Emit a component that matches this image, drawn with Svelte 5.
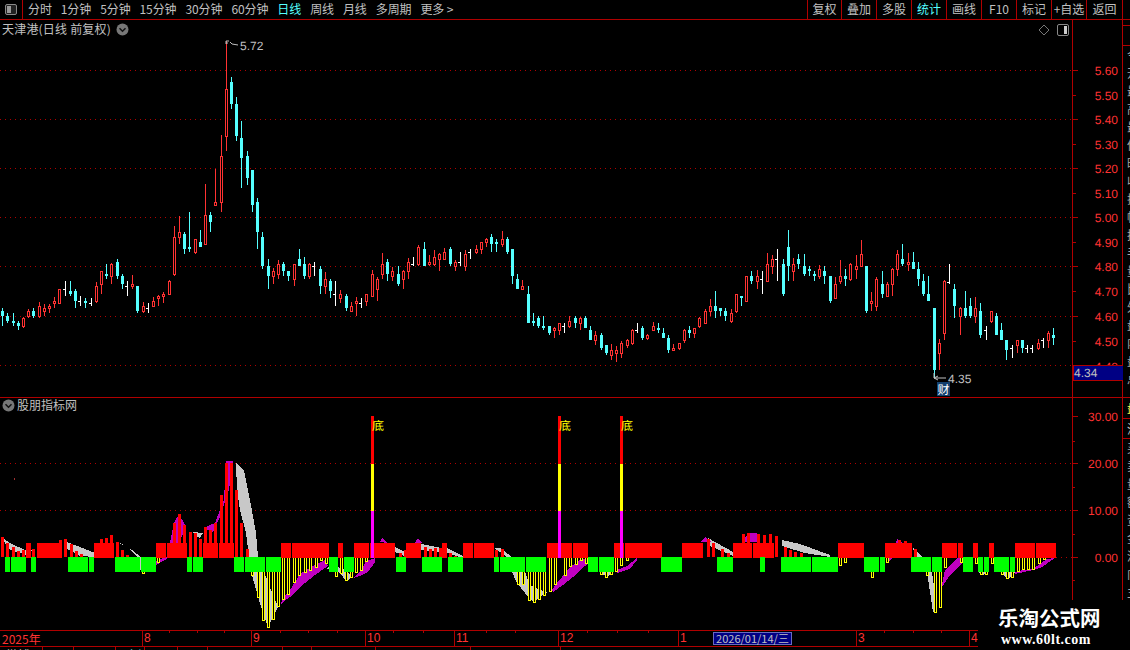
<script>
  const raw = [
    [0, 230, `7 c 234 243 258 288;22 c 250 258 273 280;40 c 250 273 280 288;55 c 273 279 288 300;70 r 262 265 291 294;85 r 238 243 261 264;100 c 235 243 258 264;118 r 217 228 261 264;133 r 223 235 246 258;148 r 223 228 237 250;163 r 202 213 222 234;178 r 178 178 222 222;196 w 153 178 180 198;211 c 153 183 192 198;226 c 178 183 213 234;241 w 198 213 215 228;256 c 205 213 220 234;273 w 204 219 221 228;289 r 156 168 216 219;304 r 123 123 165 192;319 c 102 132 138 147;334 r 99 102 141 162;352 c 87 96 138 147;367 c 132 138 162 177;382 w 153 168 170 198;397 r 135 163 171 177;412 c 168 168 243 249;430 r 216 228 246 249;445 w 219 234 235 249;460 r 201 213 231 231;475 r 195 198 207 228;490 r 186 192 201 219`],
    [160, 30, `28 r 750 754 795 795;43 r 588 622 735 738;58 r 558 607 623 642;73 c 606 612 657 672;88 c 546 652 657 666;106 r 627 628 669 672;121 c 600 636 651 651;136 r 462 556 644 644;151 c 546 555 576 606;166 r 417 517 527 527;184 r 315 379 518 546;199 r 33 178 320 363;214 c 141 156 222 237;229 c 201 222 318 333;244 c 273 324 384 474;262 c 363 378 444 465;277 c 420 420 525 546;292 c 504 516 606 657;307 c 606 621 708 717;325 c 687 708 738 777;340 r 714 723 741 762;355 r 690 702 735 747`],
    [280, 220, `10 c 126 132 153 168;25 c 153 153 168 183;43 r 132 132 180 198;58 c 87 117 138 138;73 c 111 132 168 177;88 r 129 132 171 177;103 w 126 138 140 168;121 c 138 147 198 222;136 r 156 177 201 222;151 c 177 183 213 234;166 w 183 222 224 258;181 r 210 222 237 249;199 c 222 228 264 273;214 r 246 258 276 276;229 r 232 243 252 288;244 w 234 249 251 264;259 r 222 222 246 258;277 r 150 162 231 231;292 r 171 177 210 243;307 r 99 132 165 177;322 c 117 126 162 183;337 r 141 153 171 183;355 c 138 162 192 198;370 r 150 153 180 207;385 r 114 126 156 177;400 w 111 132 135 138;415 r 75 81 135 138;433 c 66 87 138 138;448 r 105 126 135 138;463 r 90 111 135 138;478 r 99 102 120 153;493 r 84 96 120 120;511 c 81 87 132 138;526 r 120 126 141 153;541 w 96 126 128 138;556 r 90 102 141 153;571 w 87 96 98 117;589 r 75 87 99 102;604 r 66 66 90 102;619 r 54 57 69 81;634 c 42 51 72 96;649 c 57 66 72 96;667 r 33 57 75 81;682 c 51 57 96 102;697 c 87 87 168 192;712 c 162 177 207 207;727 r 180 198 210 210;745 c 198 222 309 309;760 c 279 303 309 318;775 c 288 294 318 324;790 c 288 318 324 330;808 c 318 318 339 345;823 r 321 324 333 354;838 r 309 309 333 345;853 w 309 318 320 339;868 r 288 304 322 324`],
    [570, 220, `16 c 288 294 309 324;31 r 291 294 312 330;46 c 288 294 324 324;61 c 318 330 360 360;76 r 333 345 363 375;94 c 339 345 384 390;109 c 375 375 399 405;124 r 372 390 408 420;139 r 378 390 402 426;154 r 363 369 402 414;172 r 357 360 378 384;187 r 327 330 372 375;202 w 309 330 332 339;217 c 318 324 354 360;232 r 342 345 357 360;250 r 306 318 333 333;265 c 309 324 330 339;280 c 324 339 354 354;295 c 345 354 390 399;310 r 372 384 393 393;328 r 369 369 387 390;343 r 327 330 363 369;358 c 318 330 339 354;373 r 324 324 342 354;388 r 291 294 321 324;406 r 267 273 312 312;421 r 237 258 276 288;436 c 213 258 273 294;451 c 264 264 273 288;466 c 264 273 288 303;484 r 267 279 306 309;499 r 222 222 276 279;514 c 228 228 234 258;529 r 168 168 246 246;544 c 153 168 183 192;562 r 150 168 186 207;577 w 153 177 179 222;592 r 99 132 186 186;607 r 105 117 141 162;622 w 87 117 119 183;640 c 117 132 222 228;655 c 30 81 138 183;670 r 114 132 156 183;685 c 102 117 132 147;703 c 102 138 162 168;718 c 138 147 153 168;733 c 153 162 168 183;748 r 135 147 171 177;763 c 138 153 168 192`],
    [825, 225, `16 c 153 153 228 234;31 r 156 177 222 222;46 r 105 153 171 177;61 c 132 153 162 183;76 r 114 117 165 168;94 r 90 123 135 162;109 r 45 87 126 126;124 c 123 123 258 264;139 r 201 228 237 258;154 r 156 162 246 258;172 c 138 177 207 219;187 r 171 177 216 216;202 r 129 132 180 213;217 r 75 87 135 153;232 c 57 102 117 123;250 r 84 111 120 138;265 c 81 111 132 132;280 c 111 132 162 183;295 c 147 168 207 213;310 c 153 207 228 228;328 c 249 249 435 459;343 r 342 354 387 435;358 r 165 168 327 345;373 w 117 171 173 177;388 c 177 192 243 279;406 r 246 249 276 330;421 c 198 249 273 279;436 c 219 243 273 279;451 r 216 249 276 294;466 c 234 258 330 339;484 w 303 315 317 345;499 r 258 258 291 294;514 c 264 273 330 330;529 c 294 315 345 345;544 c 345 345 375 405;562 w 360 369 371 399;577 r 345 345 363 384;592 c 345 345 369 384;607 w 360 369 371 384;622 w 360 369 371 384;640 r 342 354 372 375;655 w 339 345 347 369;670 r 318 324 348 369;685 c 309 330 339 360`]
  ];
  const candles = raw.flatMap(([ox, oy, s]) => s.split(';').map((row) => {
    const p = row.split(' ');
    const [hi, top, bot, lo] = p.slice(2).map((v) => Math.round(+v / 3) + oy);
    return { c: Math.round(+p[0] / 3 + ox - 0.5), t: p[1], hi, top, bot: Math.max(bot, top + 1), lo };
  }));

  const priceLabels = [[5.6, 70], [5.5, 95], [5.4, 119], [5.3, 144], [5.2, 168], [5.1, 193], [5.0, 217], [4.9, 242], [4.8, 266], [4.7, 291], [4.6, 316], [4.5, 341], [4.4, 366]];
  const priceGrid = [70, 119, 168, 217, 266, 316, 365];

  const redBlocks = [[26, 31], [37, 62], [94, 114], [156, 166], [167, 187], [203, 218], [219, 234], [281, 291], [292, 329], [338, 343], [354, 369], [370, 395], [406, 421], [442, 447], [463, 473], [474, 494], [547, 572], [573, 588], [614, 624], [625, 662], [682, 703], [733, 752], [753, 774], [838, 864], [885, 912], [942, 957], [958, 963], [973, 978], [989, 994], [1015, 1035], [1036, 1056]];
  const greenBlocks = [[5, 10], [11, 26], [31, 36], [68, 88], [89, 94], [115, 140], [141, 156], [187, 192], [193, 203], [234, 244], [245, 265], [266, 281], [329, 338], [344, 354], [396, 406], [422, 442], [448, 463], [494, 499], [500, 525], [526, 546], [588, 598], [599, 614], [661, 682], [717, 733], [760, 765], [781, 811], [812, 838], [864, 879], [880, 885], [911, 931], [932, 942], [963, 973], [978, 983], [984, 989], [994, 1009], [1010, 1015]];
  const redBars = [[2, 537], [7, 543], [13, 547], [18, 551], [23, 550], [33, 549], [60, 540], [65, 539], [71, 544], [76, 551], [81, 554], [101, 539], [106, 538], [111, 535], [117, 542], [122, 550], [127, 555], [174, 523], [179, 514], [184, 525], [190, 532], [195, 533], [200, 539], [205, 527], [210, 530], [215, 523], [221, 495], [226, 463], [231, 463], [236, 490], [241, 523], [247, 549], [400, 553], [405, 550], [425, 547], [430, 549], [435, 548], [440, 548], [450, 553], [455, 556], [496, 550], [502, 549], [708, 539], [713, 543], [722, 549], [728, 553], [743, 534], [748, 533], [758, 534], [764, 535], [770, 534], [776, 536], [785, 547], [790, 550], [795, 552], [801, 553], [899, 540], [905, 541], [910, 545], [915, 549]];
  const yellowBars = [[143, 573], [158, 562], [252, 575], [258, 597], [263, 620], [268, 627], [273, 619], [278, 606], [283, 599], [288, 594], [294, 582], [299, 575], [305, 572], [310, 570], [316, 567], [321, 560], [326, 563], [331, 569], [336, 576], [341, 573], [346, 580], [351, 577], [356, 572], [361, 570], [366, 561], [518, 584], [523, 584], [529, 600], [534, 602], [539, 599], [544, 595], [550, 591], [555, 584], [565, 575], [570, 566], [576, 564], [581, 560], [586, 563], [601, 574], [606, 577], [611, 574], [616, 571], [621, 565], [627, 560], [840, 565], [845, 562], [872, 577], [887, 562], [927, 575], [935, 612], [940, 607], [945, 567], [961, 562], [976, 563], [981, 574], [986, 574], [992, 563], [1002, 574], [1007, 578], [1012, 577], [1018, 571], [1023, 569], [1028, 569], [1033, 569], [1039, 563], [1044, 559]];
  const grayAreas = [
    '1,537 10,543 27,551 33,550 27,555 10,550',
    '64,541 80,547 95,553 95,557 80,556 64,547',
    '115,541 127,547 137,557 141,572 146,572 141,557 132,550 122,544',
    '193,532 203,533 200,538 197,537',
    '236,463 244,470 250,500 256,533 258,557 264,572 271,590 278,607 268,627 259,600 251,572 249,557 246,533 240,510 237,490',
    '325,568 340,573 346,581 353,577 345,570 335,566',
    '395,547 407,553 407,557 395,552',
    '421,544 442,548 442,552 421,550',
    '447,548 463,556 463,558 447,553',
    '494,548 500,548 512,557 507,557 500,552',
    '512,572 517,583 525,593 533,602 543,595 548,592 540,590 530,585 525,572',
    '600,572 607,577 613,572',
    '708,538 733,552 733,556 708,545',
    '782,540 800,544 830,555 830,557 805,553 782,546',
    '913,548 922,557 915,557',
    '927,572 933,612 937,608 932,572',
    '978,572 983,575 988,572',
    '1000,572 1007,578 1013,577 1015,572'
  ];
  const magentaAreas = [
    '156,565 170,557 165,557 156,561',
    '170,543 174,523 179,514 185,525 184,533 178,543',
    '203,528 215,523 220,510 224,500 226,461 233,461 229,490 220,517 213,532',
    '281,604 283,598 290,590 300,574 315,565 325,560 328,566 315,575 300,587 290,597 283,602',
    '353,578 360,572 366,561 375,558 375,562 368,572 360,576',
    '380,542 382,538 387,543',
    '415,543 418,538 422,543',
    '552,590 557,583 562,577 570,567 580,560 588,558 588,564 582,568 573,577 563,585 553,592',
    '617,570 627,566 637,558 637,560 630,569 617,573',
    '665,572 682,558 672,558',
    '700,542 705,537 712,542',
    '743,542 748,533 757,533 760,542',
    '888,562 893,557 888,557',
    '896,543 897,539 903,543',
    '942,585 945,570 957,558 962,558 963,562 950,575 940,590',
    '1015,572 1023,570 1033,569 1047,559 1054,558 1055,558 1042,567 1033,570 1015,574'
  ];
  const signals = [371, 558, 620];
  const indLabels = [['30.00', 416], ['20.00', 463], ['10.00', 510], ['0.00', 557]];
  const minorTicks = [441, 487, 534, 580];

  const dateMarks = [['8', 142], ['9', 251], ['10', 365], ['11', 454], ['12', 558], ['1', 678], ['3', 856], ['4', 969]];
  const dateTicks = [169, 197, 224, 280, 308, 337, 393, 423, 486, 515, 587, 617, 648, 884, 913, 941];
  const stripSeps = [42, 73, 115, 144, 177, 207, 282, 311, 375, 470, 560];

  const leftTabs = ['分时', '1分钟', '5分钟', '15分钟', '30分钟', '60分钟', '日线', '周线', '月线', '多周期', '更多 >'];
  const rightTabs = ['复权', '叠加', '多股', '统计', '画线', 'F10', '标记', '+自选', '返回'];
  const sideTop = '今开最高最低昨收振幅换手量比外盘内盘总量'.split('').slice(0, 19);
  const sideBottom = '买卖量额资金流向主'.split('');
</script>

<div class="app">
  <header class="toolbar">
    <div class="layout-btn">
      <svg width="12" height="11" viewBox="0 0 12 11"><rect x=".5" y=".5" width="11" height="10" rx="1.5" fill="#222" stroke="#8a8a8a" /><rect x="2" y="2" width="4" height="7" fill="#9a9a9a" /></svg>
    </div>
    <nav class="tabs">
      {#each leftTabs as t}
        <span class="tab" class:active={t === '日线'}>{t}</span>
      {/each}
    </nav>
    <nav class="cells">
      {#each rightTabs as t}
        <span class="cell" class:active={t === '统计'}>{t}</span>
      {/each}
    </nav>
  </header>

  <div class="body">
    <main class="charts">
      <section class="pane price">
        <div class="legend">
          <span class="title">天津港(日线 前复权)</span>
          <svg width="13" height="13" viewBox="0 0 13 13"><circle cx="6.5" cy="6.5" r="6" fill="#777" /><path d="M3.5 5.2 6.5 8.2 9.5 5.2" fill="none" stroke="#111" stroke-width="1.5" /></svg>
        </div>
        <div class="tools">
          <svg width="12" height="12" viewBox="0 0 12 12"><path d="M6 1 11 6 6 11 1 6Z" fill="none" stroke="#777" /></svg>
          <svg width="12" height="12" viewBox="0 0 12 12"><rect x=".5" y=".5" width="11" height="11" rx="1.5" fill="none" stroke="#888" /><rect x="7" y="2" width="3" height="8" fill="#ccc" /></svg>
        </div>
        <svg class="plot" width="1123" height="377" viewBox="0 20 1123 377" shape-rendering="crispEdges">
          {#each priceGrid as y}
            <line x1="0" x2="1072" y1={y + 0.5} y2={y + 0.5} class="grid" />
          {/each}
          {#each candles as k}
            {#if k.t === 'c'}
              <rect x={k.c} y={k.hi} width="1" height={k.lo - k.hi} class="cyan" />
              <rect x={k.c - 1} y={k.top} width="3" height={k.bot - k.top} class="cyan" />
            {:else if k.t === 'w'}
              <rect x={k.c} y={k.hi} width="1" height={k.lo - k.hi} class="white" />
              <rect x={k.c - 2} y={k.top} width="2" height="1" class="white" />
            {:else}
              <rect x={k.c} y={k.hi} width="1" height={k.lo - k.hi} class="red" />
              <rect x={k.c - 0.5} y={k.top + 0.5} width="2" height={Math.max(k.bot - k.top - 1, 1)} class="hollow" />
            {/if}
          {/each}

          <path d="M226 41 H229 M226 43 H228 M226 41 V44 M230 42 L232 44 L238 45" class="note" shape-rendering="auto" />
          <text x="240" y="50" class="val">5.72</text>
          <path d="M934 373 V378 H946 M934 378 L938 376 M934 378 L938 380" class="note" shape-rendering="auto" />
          <text x="948" y="383" class="val">4.35</text>
          <rect x="937" y="382" width="13" height="14" fill="#123f6e" />
          <text x="937.5" y="394" class="cai">财</text>

          <rect x="1072" y="20" width="1" height="377" class="line" />
          {#each priceLabels as [v, y], i}
            <rect x="1073" y={y} width={i % 2 === 0 ? 5 : 3} height="1" class="line" />
            <text x="1118" y={y + 5} class="axis">{v.toFixed(2)}</text>
          {/each}
          <rect x="1073" y="365" width="50" height="15" fill="#000084" stroke="#b00000" />
          <text x="1074" y="377" class="val">4.34</text>
        </svg>
      </section>

      <section class="pane ind">
        <div class="legend low">
          <svg width="13" height="13" viewBox="0 0 13 13"><circle cx="6.5" cy="6.5" r="6" fill="#777" /><path d="M3.5 5.2 6.5 8.2 9.5 5.2" fill="none" stroke="#111" stroke-width="1.5" /></svg>
          <span>股朋指标网</span>
        </div>
        <svg class="plot" width="1123" height="232" viewBox="0 398 1123 232" shape-rendering="crispEdges">
          <line x1="0" x2="1072" y1="463.5" y2="463.5" class="grid" />
          <line x1="0" x2="1072" y1="510.5" y2="510.5" class="grid" />
          <line x1="1056" x2="1072" y1="557.5" y2="557.5" class="grid" />
          <rect x="14" y="478" width="1" height="2" fill="#a03030" />
          {#each grayAreas as p}
            <polygon points={p} fill="#c8c8c8" />
          {/each}
          {#each magentaAreas as p}
            <polygon points={p} fill="#c000c0" />
          {/each}
          {#each redBars as [x, top]}
            <rect x={x - 1} y={top} width="3" height={557 - top} fill="#ff0000" />
          {/each}
          {#each yellowBars as [x, bot]}
            <rect x={x - 0.5} y="557.5" width="2" height={bot - 557} fill="#000" stroke="#ffff00" />
          {/each}
          {#each redBlocks as [a, b]}
            <rect x={a} y="543" width={b - a} height="15" fill="#ff0000" />
          {/each}
          {#each greenBlocks as [a, b]}
            <rect x={a} y="557" width={b - a} height="15" fill="#00ff00" />
          {/each}
          {#each signals as x}
            <rect x={x} y="416" width="3" height="48" fill="#ff0000" />
            <rect x={x} y="464" width="3" height="47" fill="#ffff00" />
            <rect x={x} y="511" width="3" height="47" fill="#ff00ff" />
            <text x={x + 1} y="430" class="di">底</text>
          {/each}
          <rect x="1072" y="398" width="1" height="232" class="line" />
          {#each indLabels as [t, y]}
            <rect x="1073" y={y} width="5" height="1" class="line" />
            <text x="1118" y={y + 5} class="axis">{t}</text>
          {/each}
          {#each minorTicks as y}
            <rect x="1073" y={y} width="2" height="1" class="line" />
          {/each}
        </svg>
      </section>

      <div class="dates">
        <span class="year">2025年</span>
        {#each dateMarks as [t, x]}
          <span class="mark" style:left="{x}px">{t}</span>
        {/each}
        {#each dateTicks as x}
          <i class="tick" style:left="{x}px"></i>
        {/each}
        <span class="now">2026/01/14/三</span>
      </div>

      <div class="strip">
        <span class="stub">微博</span><span class="stub cy">上证</span>
        {#each stripSeps as x}
          <i class="sep" style:left="{x}px"></i>
        {/each}
      </div>
    </main>

    <aside class="side">
      <div class="side-row boxed"></div>
      <div class="side-list">
        {#each sideTop as c}<span>{c}</span>{/each}
      </div>
      <div class="side-row yellow">盘</div>
      <div class="side-row ruled">沪</div>
      <div class="side-list tail">
        {#each sideBottom as c}<span>{c}</span>{/each}
      </div>
    </aside>
  </div>

  <div class="watermark">
    <strong>乐淘公式网</strong>
    <em>www.60lt.com</em>
  </div>
</div>

<style>
  :global(body) { margin: 0; background: #000; }
  .app {
    position: relative;
    width: 1130px;
    height: 650px;
    overflow: hidden;
    background: #000;
    color: #c0c0c0;
    font: 12px "Noto Sans CJK SC", "Liberation Sans", sans-serif;
    display: flex;
    flex-direction: column;
  }
  .toolbar {
    height: 19px;
    flex: none;
    display: flex;
    border-bottom: 1px solid #b00000;
    width: 1123px;
    padding-right: 7px;
    line-height: 18px;
  }
  .layout-btn {
    width: 23px;
    box-sizing: border-box;
    border-right: 1px solid #b00000;
    display: flex;
    align-items: center;
    justify-content: center;
  }
  .tabs { display: flex; gap: 9px; padding-left: 5px; flex: 1; }
  .tab { white-space: nowrap; letter-spacing: -0.1px; }
  .active { color: #55ffff; }
  .cells { display: flex; }
  .cell {
    width: 35px;
    box-sizing: border-box;
    border-left: 1px solid #b00000;
    text-align: center;
    white-space: nowrap;
  }
  .cell:first-child { width: 34px; }
  .cell:last-child { width: 37px; border-right: 1px solid #b00000; }
  .body { flex: 1; display: flex; min-height: 0; }
  .charts { width: 1123px; flex: none; display: flex; flex-direction: column; }
  .pane { position: relative; flex: none; }
  .price { height: 377px; border-bottom: 1px solid #b00000; }
  .ind { height: 232px; }
  .plot { display: block; }
  .legend {
    position: absolute;
    left: 2px;
    top: 1px;
    display: flex;
    align-items: center;
    gap: 5px;
    line-height: 16px;
    white-space: nowrap;
    z-index: 1;
  }
  .title { letter-spacing: 0.2px; }
  .low { top: -1px; gap: 2px; }
  .tools {
    position: absolute;
    left: 1038px;
    top: 4px;
    display: flex;
    gap: 7px;
    z-index: 1;
  }
  .grid { stroke: #b00000; stroke-width: 1; stroke-dasharray: 1 4; }
  .line { fill: #b00000; }
  .cyan { fill: #55ffff; }
  .white { fill: #fff; }
  .red { fill: #ff3232; }
  .hollow { fill: #000; stroke: #ff3232; stroke-width: 1; }
  .note { fill: none; stroke: #c0c0c0; stroke-width: 1; }
  text { font-family: "Liberation Sans", sans-serif; font-size: 12px; text-rendering: geometricPrecision; }
  .val { fill: #c0c0c0; }
  .axis { fill: #ff3232; text-anchor: end; }
  .cai { fill: #fff; font-family: "Noto Sans CJK SC", sans-serif; }
  .di { fill: #ffff00; font-family: "Noto Sans CJK SC", sans-serif; }
  .dates {
    position: relative;
    height: 15px;
    flex: none;
    box-sizing: content-box;
    border-top: 1px solid #b00000;
    border-bottom: 1px solid #b00000;
    color: #ff3232;
    line-height: 15px;
  }
  .year { position: absolute; left: 2px; top: 0; }
  .mark {
    position: absolute;
    top: 0;
    bottom: 0;
    padding-left: 1px;
    border-left: 1px solid #b00000;
    font-family: "Liberation Sans", sans-serif;
  }
  .tick { position: absolute; top: 0; width: 1px; height: 2px; background: #b00000; }
  .now {
    position: absolute;
    left: 713px;
    top: 1px;
    width: 79px;
    height: 13px;
    line-height: 13px;
    box-sizing: border-box;
    background: #000084;
    color: #c0c0c0;
    border: 1px solid #6a6ac0;
    text-align: center;
    font: 11px/11px "Noto Sans CJK SC", sans-serif;
    white-space: nowrap;
  }
  .strip { position: relative; height: 3px; overflow: hidden; line-height: 16px; }
  .stub { margin-left: 6px; margin-right: 90px; }
  .cy { color: #55ffff; }
  .sep { position: absolute; top: 0; width: 1px; height: 3px; background: #b00000; }
  .side {
    flex: 1;
    height: 580px;
    border-left: 1px solid #b00000;
    margin-top: -20px;
    padding-top: 25px;
    display: flex;
    flex-direction: column;
    overflow: hidden;
    margin-left: -1px;
    box-sizing: content-box;
  }
  .side-row { height: 19px; flex: none; padding-left: 4px; line-height: 19px; white-space: nowrap; overflow: hidden; }
  .boxed { border-top: 1px solid #b00000; border-bottom: 1px solid #b00000; }
  .side-list { display: flex; flex-direction: column; height: 351px; overflow: hidden; flex: none; }
  .side-list span { display: block; height: 18px; line-height: 18px; flex: none; padding-left: 4px; color: #a8a8a8; }
  .yellow { color: #ffff55; border-top: 1px solid #b00000; border-bottom: 1px solid #b00000; height: 20px; }
  .ruled { border-bottom: 1px solid #b00000; }
  .tail { height: 163px; }
  .watermark {
    position: absolute;
    left: 978px;
    top: 600px;
    width: 152px;
    height: 50px;
    background: #000;
    display: flex;
    flex-direction: column;
    align-items: flex-start;
    padding-left: 20px;
    box-sizing: border-box;
    color: #fff;
  }
  .watermark strong {
    margin-top: 4px;
    font: 700 20.5px/26px "Noto Sans CJK SC", sans-serif;
    white-space: nowrap;
  }
  .watermark em {
    font: 700 14px/15px "Liberation Serif", serif;
    margin-left: 3px;
    margin-top: 2px;
    letter-spacing: 0.5px;
    white-space: nowrap;
  }
</style>
